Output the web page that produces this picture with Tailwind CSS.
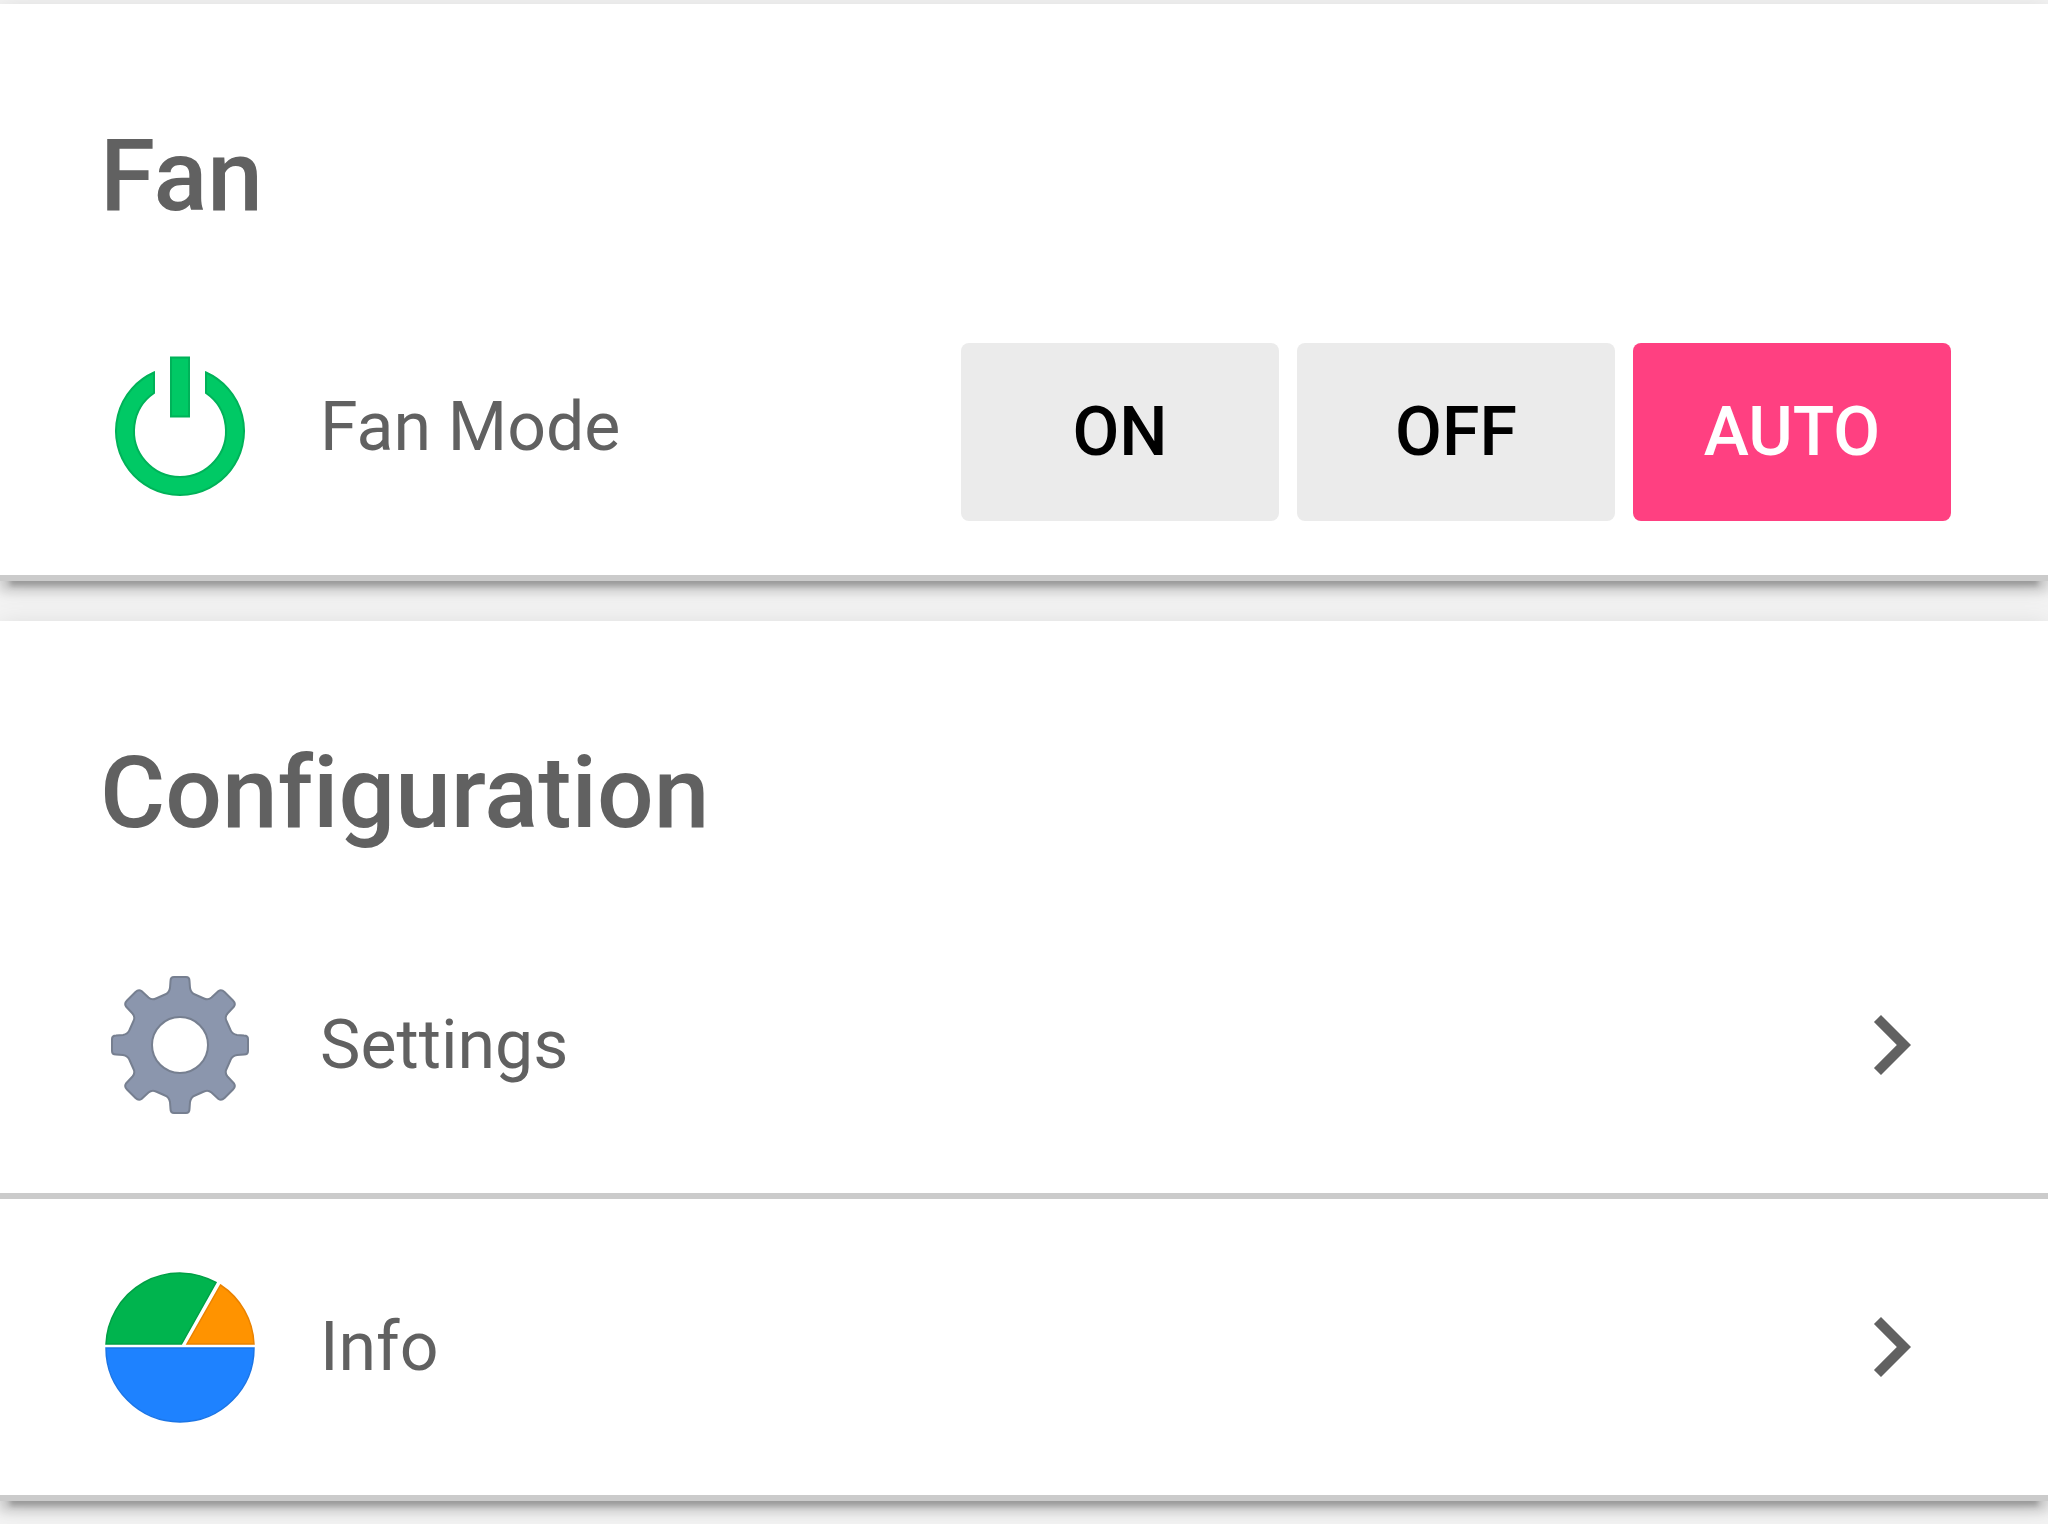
<!DOCTYPE html>
<html lang="en">
<head>
<meta charset="utf-8">
<meta name="viewport" content="width=device-width, initial-scale=1">
<title>Fan</title>
<script src="https://cdn.jsdelivr.net/npm/@tailwindcss/browser@4"></script>
</head>
<body class="min-h-screen overflow-x-hidden bg-[#f3f3f3] font-[Roboto,sans-serif] text-[68px] leading-20 text-[#616161] [font-variant-ligatures:none]">
<main class="flex flex-col gap-10 pt-1">

  <section class="relative border-b-6 border-[#cbcbcb] bg-white shadow-[0_15px_5px_-10px_rgba(0,0,0,0.2),0_10px_10px_0_rgba(0,0,0,0.14),0_5px_25px_0_rgba(0,0,0,0.12)]">
    <h2 class="px-25 pt-28 pb-[43px] text-[100px] leading-30 font-medium">Fan</h2>
    <div class="flex h-74 items-center gap-15 pr-[97px] pl-25">
      <svg class="size-40 shrink-0" viewBox="0 0 160 160" fill="#00c965" stroke="#00b259" stroke-width="2" aria-hidden="true">
        <path d="M54 25.500A64 64 0 1 0 106 25.500V46A46 46 0 1 1 54 46Z"/>
        <path d="M71 10.500H89V69.500H71Z"/>
      </svg>
      <span id="fan-mode" class="flex-1">Fan Mode</span>
      <div class="flex gap-[18px] pt-2.5 text-black" role="group" aria-labelledby="fan-mode">
        <button type="button" class="h-[178px] w-[318px] rounded-lg bg-[#ebebeb] font-medium">ON</button>
        <button type="button" class="h-[178px] w-[318px] rounded-lg bg-[#ebebeb] font-medium">OFF</button>
        <button type="button" class="h-[178px] w-[318px] rounded-lg bg-[#ff4081] font-medium text-white" aria-pressed="true">AUTO</button>
      </div>
    </div>
  </section>

  <section class="relative border-b-6 border-[#cbcbcb] bg-white shadow-[0_15px_5px_-10px_rgba(0,0,0,0.2),0_10px_10px_0_rgba(0,0,0,0.14),0_5px_25px_0_rgba(0,0,0,0.12)]">
    <h2 class="px-25 pt-28 pb-[43px] text-[100px] leading-30 font-medium">Configuration</h2>
    <a href="#settings" class="flex h-[303px] items-center gap-15 border-b-6 border-[#cbcbcb] pr-[97px] pl-25">
      <svg class="size-40 shrink-0" viewBox="-80 -80 160 160" fill="#8b96ad" stroke="#767f90" stroke-width="2" stroke-linejoin="round" aria-hidden="true">
        <path fill-rule="evenodd" d="M-6 -68H6Q9.500 -68 9.500 -64L10 -57Q11 -52 15 -50.500L24 -46.500Q28 -44.500 31.500 -47.500L38.500 -54Q41.500 -56 44.500 -53L53 -44.500Q56 -41.500 54 -38.500L47.500 -31.500Q44.500 -28 46.500 -24L50.500 -15Q52 -11 57 -10L64 -9.500Q68 -9.500 68 -6V6Q68 9.500 64 9.500L57 10Q52 11 50.500 15L46.500 24Q44.500 28 47.500 31.500L54 38.500Q56 41.500 53 44.500L44.500 53Q41.500 56 38.500 54L31.500 47.500Q28 44.500 24 46.500L15 50.500Q11 52 10 57L9.500 64Q9.500 68 6 68H-6Q-9.500 68 -9.500 64L-10 57Q-11 52 -15 50.500L-24 46.500Q-28 44.500 -31.500 47.500L-38.500 54Q-41.500 56 -44.500 53L-53 44.500Q-56 41.500 -54 38.500L-47.500 31.500Q-44.500 28 -46.500 24L-50.500 15Q-52 11 -57 10L-64 9.500Q-68 9.500 -68 6V-6Q-68 -9.500 -64 -9.500L-57 -10Q-52 -11 -50.500 -15L-46.500 -24Q-44.500 -28 -47.500 -31.500L-54 -38.500Q-56 -41.500 -53 -44.500L-44.500 -53Q-41.500 -56 -38.500 -54L-31.500 -47.500Q-28 -44.500 -24 -46.500L-15 -50.500Q-11 -52 -10 -57L-9.500 -64Q-9.500 -68 -6 -68ZM28 0A28 28 0 1 0 -28 0A28 28 0 1 0 28 0Z"/>
      </svg>
      <span class="flex-1">Settings</span>
      <svg class="size-30 shrink-0" viewBox="0 0 24 24" fill="currentColor" aria-hidden="true"><path d="M10 6L8.590 7.410 13.170 12l-4.580 4.590L10 18l6-6z"/></svg>
    </a>
    <a href="#info" class="flex h-74 items-center gap-15 pr-[97px] pl-25">
      <svg class="size-40 shrink-0" viewBox="-80 -80 160 160" stroke-width="1.500" aria-hidden="true">
        <path fill="#00b44e" stroke="#00a045" d="M-74 -3A74 74 0 0 1 36 -64.500L1.500 -3Z"/>
        <path fill="#ff9300" stroke="#ea8200" d="M40.500 -62A74 74 0 0 1 74 -3H7Z"/>
        <path fill="#1e82ff" stroke="#1b75e6" d="M-74 1H74A74 74 0 0 1 -74 1Z"/>
      </svg>
      <span class="flex-1">Info</span>
      <svg class="size-30 shrink-0" viewBox="0 0 24 24" fill="currentColor" aria-hidden="true"><path d="M10 6L8.590 7.410 13.170 12l-4.580 4.590L10 18l6-6z"/></svg>
    </a>
  </section>

</main>
</body>
</html>
